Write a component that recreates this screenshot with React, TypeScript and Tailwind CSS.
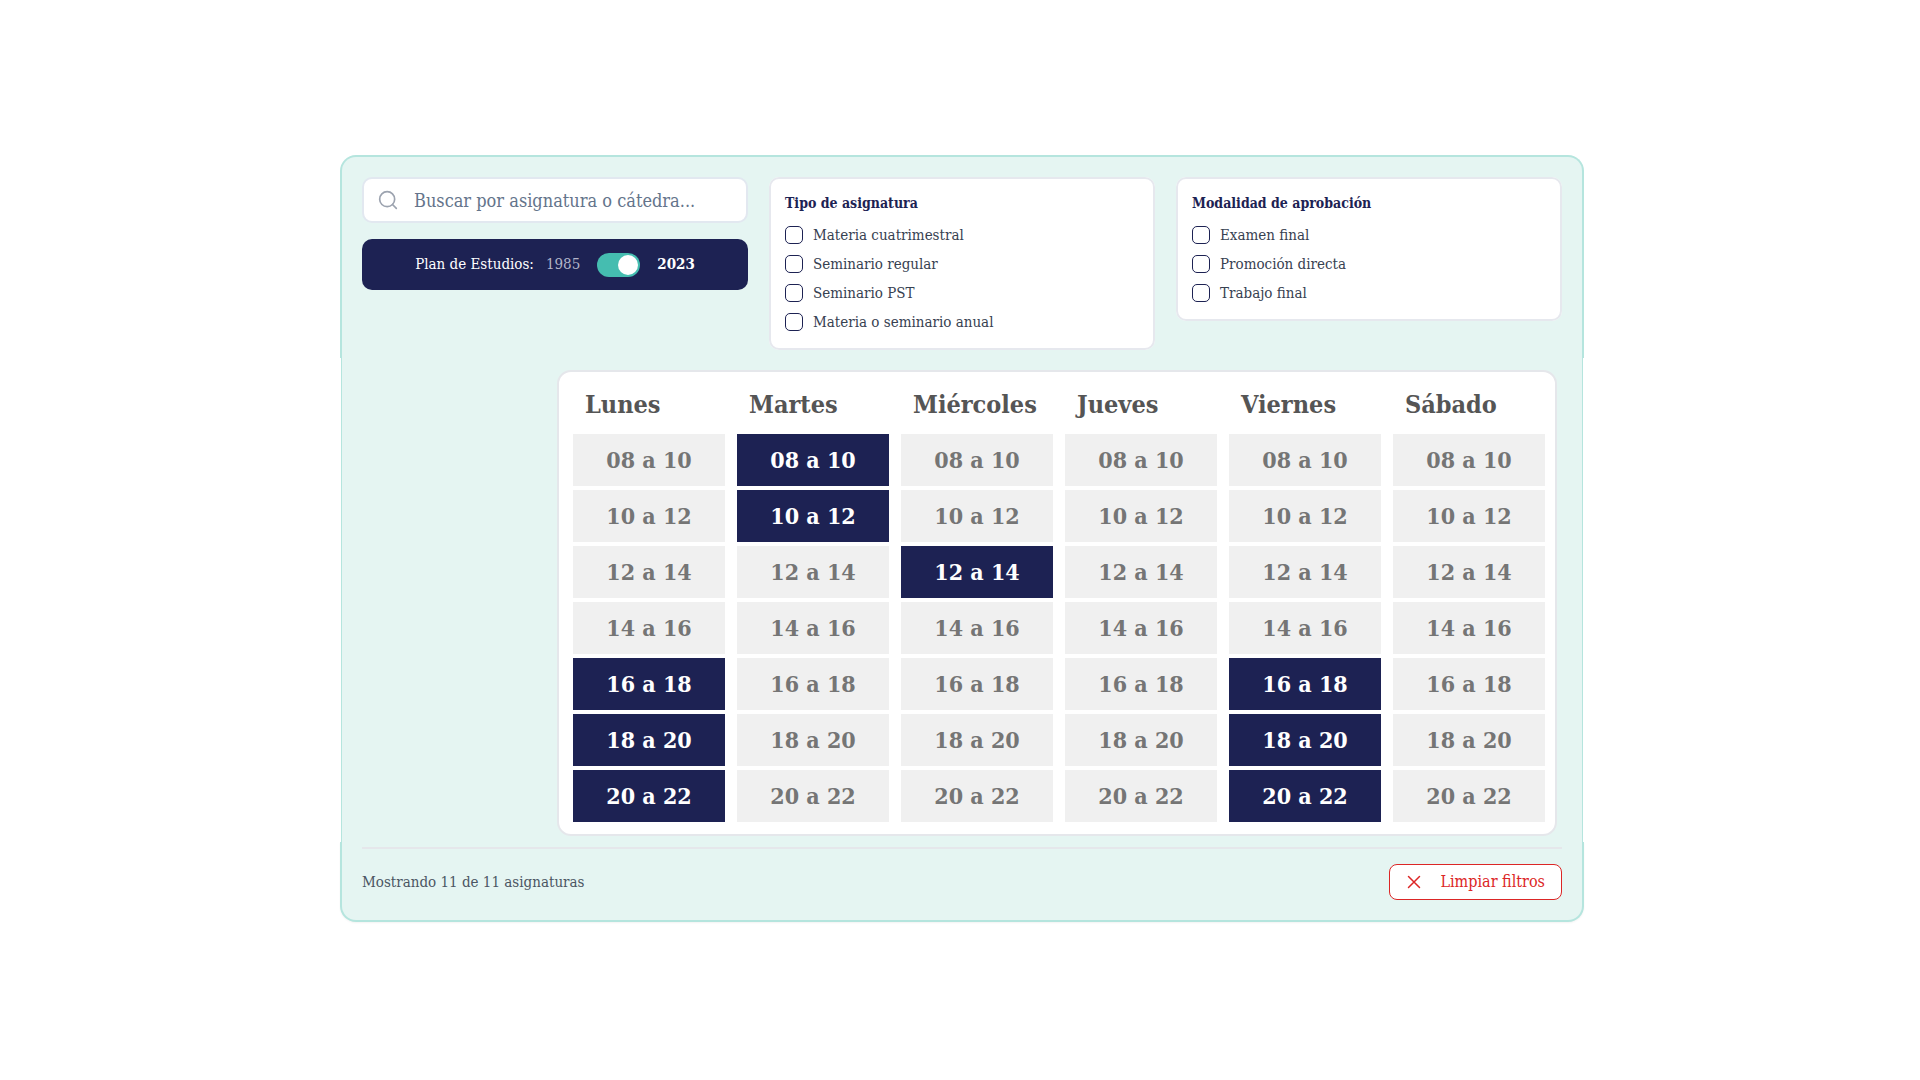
import { useState } from "react";

const days = ["Lunes", "Martes", "Miércoles", "Jueves", "Viernes", "Sábado"];
const slots = ["08 a 10", "10 a 12", "12 a 14", "14 a 16", "16 a 18", "18 a 20", "20 a 22"];
const initialSlots = ["1-0", "1-1", "2-2", "0-4", "0-5", "0-6", "4-4", "4-5", "4-6"];

function SearchIcon() {
  return (
    <svg viewBox="0 0 24 24" className="size-5 shrink-0 text-[#9ca3af]" fill="none" stroke="currentColor" strokeWidth="2" strokeLinecap="round" strokeLinejoin="round" aria-hidden="true">
      <circle cx="11" cy="11" r="9" />
      <path d="m22 22-4.6-4.6" />
    </svg>
  );
}

function CloseIcon() {
  return (
    <svg viewBox="0 0 16 16" className="size-4 shrink-0" fill="none" stroke="currentColor" strokeWidth="1.5" strokeLinecap="round" aria-hidden="true">
      <path d="M2.5 2.5l11 11M13.5 2.5l-11 11" />
    </svg>
  );
}

function FilterGroup({ title, options }: { title: string; options: string[] }) {
  return (
    <fieldset className="self-start rounded-[10px] border-2 border-[#e6e8ee] bg-white px-3.5 pt-3 pb-3.5">
      <legend className="float-left w-full text-[14px] leading-6 font-bold text-[#1d2253]">{title}</legend>
      <div className="clear-both flex flex-col gap-[5px] pt-2">
        {options.map((option) => (
          <label key={option} className="flex items-center gap-2.5 text-[15px] leading-6 text-[#374151]">
            <input type="checkbox" className="size-[18px] shrink-0 appearance-none rounded-[5px] border-[1.5px] border-[#1d2253] bg-white checked:bg-[#1d2253]" />
            {option}
          </label>
        ))}
      </div>
    </fieldset>
  );
}

function Schedule() {
  const [selected, setSelected] = useState(initialSlots);
  const toggle = (key: string) =>
    setSelected((s) => (s.includes(key) ? s.filter((k) => k !== key) : [...s, key]));

  return (
    <table className="w-full table-fixed border-separate border-spacing-x-0 border-spacing-y-1 font-bold">
      <thead>
        <tr>
          {days.map((day) => (
            <th key={day} scope="col" className="h-[50px] p-0 pl-[18px] text-left align-middle text-[25px] text-[#555555]">
              {day}
            </th>
          ))}
        </tr>
      </thead>
      <tbody>
        {slots.map((slot, row) => (
          <tr key={slot}>
            {days.map((day, col) => {
              const key = `${col}-${row}`;
              const on = selected.includes(key);
              return (
                <td key={day} className="px-1.5 py-0">
                  <button
                    type="button"
                    aria-pressed={on}
                    aria-label={`${day} ${slot}`}
                    onClick={() => toggle(key)}
                    className={`block h-[52px] w-full text-[23px] ${on ? "bg-[#1d2253] text-white" : "bg-[#f0f0f0] text-[#757575]"}`}
                  >
                    {slot}
                  </button>
                </td>
              );
            })}
          </tr>
        ))}
      </tbody>
    </table>
  );
}

export default function App() {
  const [newPlan, setNewPlan] = useState(true);

  return (
    <main className="min-h-screen bg-white pt-[155px] pl-1 font-['DejaVu_Serif_Condensed','DejaVu_Serif',serif]">
      <div className="mx-auto max-w-[1244px]">
        <section className="grid grid-cols-3 gap-[21px] rounded-t-2xl border-x-2 border-t-2 border-[#b5e5de] bg-[#e5f5f2] px-5 pt-5 pb-2">
          <div className="flex flex-col gap-4">
            <label className="flex h-[46px] items-center gap-4 rounded-[10px] border-2 border-[#e2e8f0] bg-white px-3.5">
              <SearchIcon />
              <input type="search" aria-label="Buscar" placeholder="Buscar por asignatura o cátedra..." className="min-w-0 flex-1 text-[18px] outline-none placeholder:text-[#64748b]" />
            </label>
            <div className="flex h-[51px] items-center justify-center rounded-[10px] bg-[#1d2253] text-[15px] text-white">
              <span className="mr-3 font-medium">Plan de Estudios:</span>
              <span className="text-[#b3b6c9]">1985</span>
              <button
                type="button"
                role="switch"
                aria-checked={newPlan}
                aria-label="Plan 2023"
                onClick={() => setNewPlan(!newPlan)}
                className={`mx-[17px] flex h-6 w-[43px] items-center rounded-full bg-[#45bdb0] px-0.5 ${newPlan ? "justify-end" : "justify-start"}`}
              >
                <span className="size-5 rounded-full bg-white" />
              </button>
              <span className="font-bold">2023</span>
            </div>
          </div>
          <FilterGroup title="Tipo de asignatura" options={["Materia cuatrimestral", "Seminario regular", "Seminario PST", "Materia o seminario anual"]} />
          <FilterGroup title="Modalidad de aprobación" options={["Examen final", "Promoción directa", "Trabajo final"]} />
        </section>

        <section className="mx-px border-x border-[#b5e5de] bg-[#e5f5f2] pt-3 pr-[25px] pb-1.5 pl-[215px]">
          <div className="rounded-[14px] border-2 border-[#e5e7eb] bg-white pt-1 pr-1 pb-2 pl-2">
            <Schedule />
          </div>
        </section>

        <section className="rounded-b-2xl border-x-2 border-b-2 border-[#b5e5de] bg-[#e5f5f2] px-5 pt-[5px] pb-5 shadow-xs">
          <div className="flex items-center justify-between border-t-2 border-[#e5e7eb] pt-[15px]">
            <p className="text-[15px] text-[#4b5563]">Mostrando 11 de 11 asignaturas</p>
            <button type="button" className="flex h-9 items-center gap-[18px] rounded-lg border-[1.5px] border-[#dc2626] bg-white px-4 text-[16px] text-[#dc2626]">
              <CloseIcon />
              Limpiar filtros
            </button>
          </div>
        </section>
      </div>
    </main>
  );
}
